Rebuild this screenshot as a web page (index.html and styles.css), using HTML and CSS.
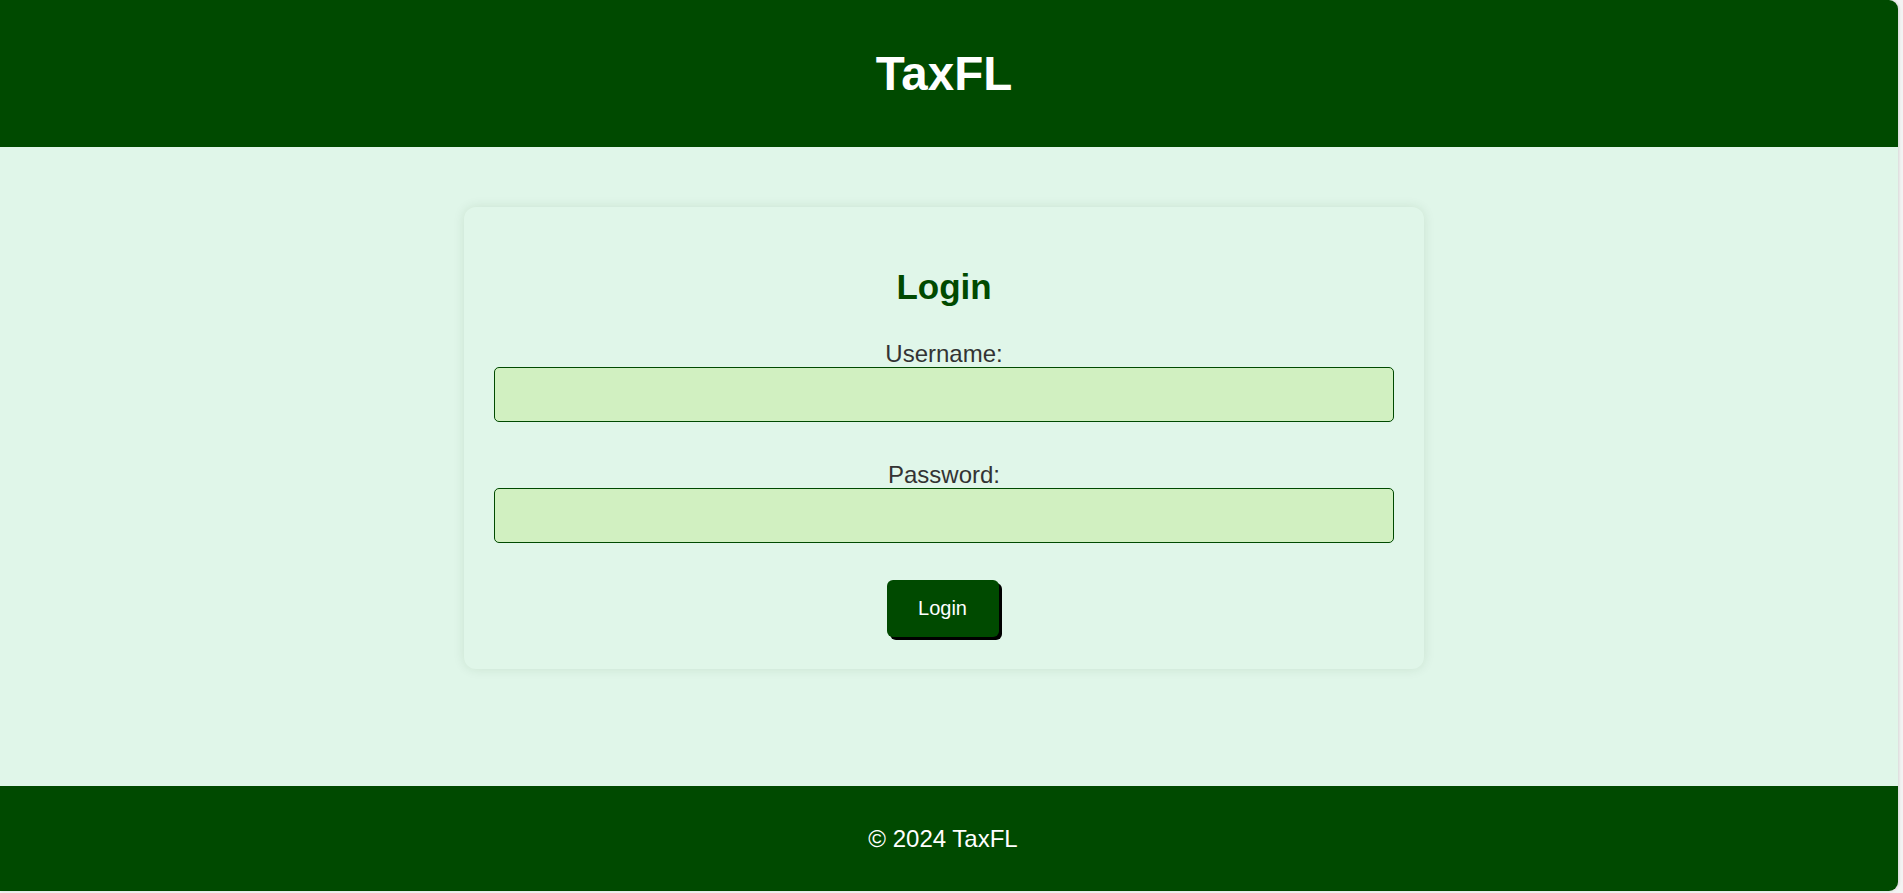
FILE: index.html
```html
<!DOCTYPE html>
<html lang="en">
<head>
<meta charset="utf-8">
<title>TaxFL - Login</title>
<link rel="stylesheet" href="styles.css">
</head>
<body>
<div class="page">
  <header class="site-header">
    <h1 class="brand">TaxFL</h1>
  </header>
  <main class="site-main">
    <div class="login-card">
      <h2 class="login-title">Login</h2>
      <form class="login-form">
        <label class="field-label" for="username">Username:</label>
        <input class="field-input" type="text" id="username" name="username">
        <label class="field-label" for="password">Password:</label>
        <input class="field-input field-last" type="password" id="password" name="password">
        <button class="login-btn" type="submit">Login</button>
      </form>
    </div>
  </main>
  <footer class="site-footer">
    <p class="copyright">&copy; 2024 TaxFL</p>
  </footer>
</div>
</body>
</html>
```

FILE: styles.css
```css
html, body {
  margin: 0;
  padding: 0;
}
body {
  background: #f3f3f3;
  font-family: "Liberation Sans", Arial, sans-serif;
  height: 893px;
  overflow: hidden;
}
.page {
  width: 1898px;
  height: 891px;
  display: flex;
  flex-direction: column;
  border-radius: 0 9px 9px 0;
  overflow: hidden;
  background: #e0f6e9;
  box-shadow: 1px 0 3px rgba(0, 0, 0, 0.12);
}
.site-header {
  height: 147px;
  flex: none;
  background: #004a00;
  display: flex;
  align-items: center;
  justify-content: center;
  padding-right: 10px;
}
.brand {
  margin: 0;
  color: #ffffff;
  font-size: 47.5px;
  font-weight: bold;
  line-height: 54px;
}
.site-main {
  flex: 1;
  display: flex;
  flex-direction: column;
  align-items: center;
  padding: 60px 10px 0 0;
}
.login-card {
  width: 960px;
  box-sizing: border-box;
  padding: 30px 30px 32px;
  background: #e0f6e9;
  border-radius: 12px;
  box-shadow: 0 0 12px rgba(0, 60, 20, 0.1);
  text-align: center;
}
.login-title {
  margin: 30px 0 33px;
  color: #004a00;
  font-size: 35px;
  font-weight: bold;
  line-height: 40px;
}
.login-form {
  display: flex;
  flex-direction: column;
  align-items: center;
}
.field-label {
  display: block;
  color: #333333;
  font-size: 24px;
  line-height: 27px;
}
.field-input {
  display: block;
  width: 100%;
  height: 55px;
  box-sizing: border-box;
  margin: 0 0 39px;
  border: 1px solid #004a00;
  border-radius: 5px;
  background: #d1f0c1;
  font-size: 20px;
  font-family: inherit;
  padding: 0 12px;
}
.field-last {
  margin-bottom: 37px;
}
.login-btn {
  width: 112px;
  height: 57px;
  margin-right: 3px;
  border: none;
  border-radius: 6px;
  background: #004a00;
  color: #ffffff;
  font-family: inherit;
  font-size: 20px;
  box-shadow: 3px 3px 0 #000000;
  cursor: pointer;
  padding: 0;
}
.site-footer {
  height: 105px;
  flex: none;
  background: #004a00;
  display: flex;
  align-items: center;
  justify-content: center;
  padding-right: 12px;
}
.copyright {
  margin: 0;
  color: #ffffff;
  font-size: 24px;
  line-height: 27px;
}
```
